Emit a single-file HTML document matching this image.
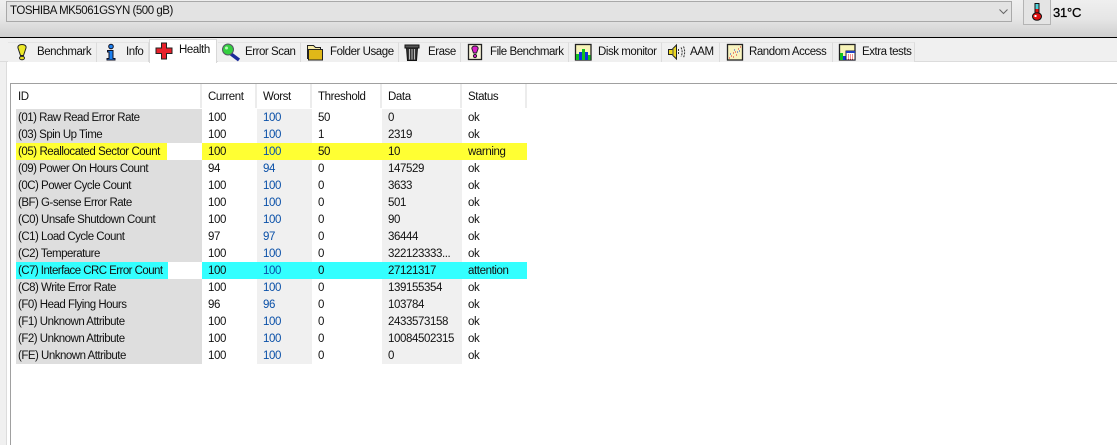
<!DOCTYPE html>
<html><head><meta charset="utf-8">
<style>
html,body{margin:0;padding:0;background:#fff}
#p{position:relative;width:1117px;height:445px;overflow:hidden;background:#fff;font:11.500px/17px "Liberation Sans",sans-serif;letter-spacing:-.4px;color:#111}
.a{position:absolute}
.t{position:absolute;white-space:nowrap}
.tab{position:absolute;top:42px;height:19px;background:#f0f0f0;border-right:1px solid #dcdcdc;border-top:1px solid #e4e4e4;box-sizing:content-box}
.tab span{position:absolute;top:1px;white-space:nowrap;line-height:17px;letter-spacing:-.45px}
.tab svg{position:absolute;top:0;left:0}
.r{position:absolute;left:16px;width:511px;height:17px}
.r div{position:absolute;top:0;height:17px;white-space:nowrap;line-height:19px;box-sizing:border-box;overflow:hidden}
.c0{left:0;width:186px;background:#dedede;padding-left:2px;letter-spacing:-.5px}
.c1{left:186px;width:55px;padding-left:6px}
.c2{left:241px;width:55px;padding-left:6px;background:#f0f0f0;color:#0a50a8}
.c3{left:296px;width:70px;padding-left:6px}
.c4{left:366px;width:80px;padding-left:6px;background:#f0f0f0}
.c5{left:446px;width:65px;padding-left:6px}
.y div{background:#ffff33}
.b div{background:#33ffff}
.y .c2,.b .c2{color:#0a50a8}
.y .c0,.b .c0{background:#fff;padding:0}
.y .c0 i,.b .c0 i{display:block;font-style:normal;height:17px;padding-left:2px;box-sizing:border-box}
.y .c0 i{background:#ffff33;width:151px;letter-spacing:-.44px}
.b .c0 i{background:#33ffff;width:152px;letter-spacing:-.55px}
.h{position:absolute;top:84px;height:24px;line-height:26px;white-space:nowrap;border-right:2px solid #ececec;box-sizing:border-box;padding-left:6px}
</style></head><body>
<div id="p">
<div class="a" style="left:0;top:0;width:1117px;height:37px;background:linear-gradient(#efefef 0,#e6e6e6 50%,#cfcfcf 100%)"></div>
<div class="a" style="left:0;top:37px;width:1117px;height:1px;background:#000"></div>
<div class="a" style="left:0;top:38px;width:1117px;height:24px;background:#f0f0f0"></div>
<div class="a" style="left:0;top:61px;width:1117px;height:1px;background:#dcdcdc"></div>
<div class="a" style="left:0;top:62px;width:6px;height:383px;background:#f0f0f0"></div>
<div class="a" style="left:6px;top:62px;width:1px;height:383px;background:#dcdcdc"></div>

<div class="a" style="left:6px;top:1px;width:1006px;height:21px;box-sizing:border-box;background:#e3e3e3;border:1px solid #a9a9a9"></div>
<div class="t" style="left:10px;top:3px;letter-spacing:-.47px">TOSHIBA MK5061GSYN (500 gB)</div>
<svg class="a" style="left:998px;top:8px" width="12" height="8"><path d="M1.500 1.500L5.500 5.500L9.500 1.500" fill="none" stroke="#666" stroke-width="1"/></svg>

<div class="a" style="left:1023px;top:-1px;width:28px;height:26px;box-sizing:border-box;border:1px solid #b4b4b4;background:#e4e4e4"></div>
<svg class="a" style="left:1030px;top:2px" width="14" height="19"><rect x="4.500" y="1" width="5" height="12" fill="#111"/><rect x="5.500" y="2" width="3" height="5" fill="#4fd0d8"/><rect x="5.500" y="7" width="3" height="7" fill="#e01010"/><ellipse cx="7" cy="14.500" rx="4.500" ry="3.800" fill="#e01010" stroke="#111"/><rect x="4.500" y="13" width="2" height="2" fill="#fff"/></svg>
<div class="t" style="left:1053px;top:4px;font-size:13px;letter-spacing:-.2px;color:#000;-webkit-text-stroke:.3px #000">31°C</div>

<!-- tabs -->
<div class="tab" style="left:8px;width:88px"><svg width="30" height="20"><path d="M14 1.500c3 0 4.500 1.500 4 3.500l-2.500 7.500h-3L10 5c-.5-2 1-3.500 4-3.500z" fill="#ece828" stroke="#222"/><ellipse cx="14" cy="15" rx="2.500" ry="1.800" fill="#e8e020" stroke="#222"/></svg><span style="left:29px">Benchmark</span></div>
<div class="tab" style="left:97px;width:51px"><svg width="30" height="20"><circle cx="14" cy="3.500" r="2.300" fill="#1c80f0" stroke="#112"/><path d="M10.500 7.500h5.500v8h2v1.500h-8v-1.500h2v-6.500h-1.500z" fill="#1c80f0" stroke="#112"/></svg><span style="left:29px">Info</span></div>
<div class="a" style="left:149px;top:39px;width:68px;height:24px;background:#fff;border:1px solid #d8d8d8;border-bottom:0;box-sizing:border-box">
<svg class="a" style="left:5px;top:2px" width="20" height="20"><path d="M6.500 1h5v5H17v5.500h-5.500V17h-5v-5.500H1V6h5.500z" fill="#e8202a" stroke="#222"/></svg><span class="t" style="left:29px;top:2px">Health</span></div>
<div class="tab" style="left:218px;width:82px"><svg width="30" height="20"><path d="M13 11l8 6" stroke="#1a2a9a" stroke-width="3.500"/><circle cx="10" cy="6.500" r="5.500" fill="#35d040" stroke="#556"/><circle cx="8.500" cy="5" r="1.500" fill="#b8f8b8"/></svg><span style="left:27px">Error Scan</span></div>
<div class="tab" style="left:301px;width:97px"><svg width="30" height="20"><path d="M6.500 16V2.500h6l2 2h5v3" fill="#f8eca8" stroke="#222"/><rect x="7.500" y="6.500" width="14" height="10.500" fill="#e0b818" stroke="#222"/></svg><span style="left:29px">Folder Usage</span></div>
<div class="tab" style="left:399px;width:61px"><svg width="30" height="20"><rect x="6" y="2" width="14" height="3" fill="#555" stroke="#111"/><path d="M7.500 5h11l-1 12.500h-9z" fill="#333" stroke="#111"/><path d="M10.500 6v10.500M13 6v10.500M15.500 6v10.500" stroke="#bbb"/></svg><span style="left:29px">Erase</span></div>
<div class="tab" style="left:461px;width:107px"><svg width="30" height="20"><rect x="7.500" y="1.500" width="13" height="15" fill="#f8f4d8" stroke="#222" stroke-width="1.300"/><path d="M14 3c2.500 0 3.500 1.500 3 3l-1.500 4h-3L11 6c-.5-1.500.5-3 3-3z" fill="#d820c8" stroke="#222"/><circle cx="14" cy="13" r="1.600" fill="#d820c8" stroke="#222"/></svg><span style="left:29px">File Benchmark</span></div>
<div class="tab" style="left:569px;width:92px"><svg width="30" height="20"><rect x="6.500" y="1.500" width="15.500" height="15.500" fill="#f8f4b8" stroke="#222" stroke-width="1.300"/><rect x="7" y="11" width="3" height="6" fill="#10c020"/><rect x="10" y="9" width="3" height="8" fill="#1030e0"/><rect x="13" y="6" width="3" height="11" fill="#10c020"/><rect x="16" y="9" width="3" height="8" fill="#1030e0"/><rect x="19" y="12" width="2.500" height="5" fill="#10c020"/></svg><span style="left:29px">Disk monitor</span></div>
<div class="tab" style="left:662px;width:57px"><svg width="30" height="20"><path d="M6.500 6.500h3.500l4.500-4.500v14l-4.500-4.500h-3.500z" fill="#ecd820" stroke="#222"/><path d="M11 5v8" stroke="#555"/><path d="M16.500 6v6M19 4.500c1.500 2.500 1.500 6.500 0 9M21.500 3.500c1.500 3.500 1.500 7.500 0 11" fill="none" stroke="#333" stroke-dasharray="2 1"/></svg><span style="left:28px">AAM</span></div>
<div class="tab" style="left:720px;width:112px"><svg width="30" height="20"><rect x="7.500" y="1.500" width="15" height="15.500" fill="#f8f4c0" stroke="#222" stroke-width="1.300"/><path d="M9 15h1M11 13h1M13 14h1M13 10h1M15 9h1M16 12h1M18 6h1M20 4h1" stroke="#e02020"/><path d="M10 11h1M14 7h1M17 9h1M19 8h1" stroke="#2040d0"/></svg><span style="left:29px">Random Access</span></div>
<div class="tab" style="left:833px;width:81px"><svg width="30" height="20"><rect x="6.500" y="1.500" width="15.500" height="15.500" fill="#f8f4b8" stroke="#222" stroke-width="1.300"/><rect x="7" y="10" width="3" height="7" fill="#10c020"/><rect x="10" y="13" width="3" height="4" fill="#1030e0"/><rect x="13" y="8" width="9" height="9" fill="#fff" stroke="#223"/><rect x="13" y="8" width="9" height="2" fill="#2040c0"/><path d="M15 12h6M15 14h6M15 16h6" stroke="#e02020" stroke-dasharray="1 1"/></svg><span style="left:29px">Extra tests</span></div>

<!-- table frame -->
<div class="a" style="left:10px;top:83px;width:1107px;height:1px;background:#a0a0a0"></div>
<div class="a" style="left:10px;top:83px;width:1px;height:362px;background:#a0a0a0"></div>

<div class="h" style="left:12px;width:190px">ID</div>
<div class="h" style="left:202px;width:55px">Current</div>
<div class="h" style="left:257px;width:55px">Worst</div>
<div class="h" style="left:312px;width:70px">Threshold</div>
<div class="h" style="left:382px;width:80px">Data</div>
<div class="h" style="left:462px;width:65px">Status</div>

<div class="r" style="top:109px"><div class="c0">(01) Raw Read Error Rate</div><div class="c1">100</div><div class="c2">100</div><div class="c3">50</div><div class="c4">0</div><div class="c5">ok</div></div>
<div class="r" style="top:126px"><div class="c0">(03) Spin Up Time</div><div class="c1">100</div><div class="c2">100</div><div class="c3">1</div><div class="c4">2319</div><div class="c5">ok</div></div>
<div class="r y" style="top:143px"><div class="c0"><i>(05) Reallocated Sector Count</i></div><div class="c1">100</div><div class="c2">100</div><div class="c3">50</div><div class="c4">10</div><div class="c5">warning</div></div>
<div class="r" style="top:160px"><div class="c0">(09) Power On Hours Count</div><div class="c1">94</div><div class="c2">94</div><div class="c3">0</div><div class="c4">147529</div><div class="c5">ok</div></div>
<div class="r" style="top:177px"><div class="c0">(0C) Power Cycle Count</div><div class="c1">100</div><div class="c2">100</div><div class="c3">0</div><div class="c4">3633</div><div class="c5">ok</div></div>
<div class="r" style="top:194px"><div class="c0">(BF) G-sense Error Rate</div><div class="c1">100</div><div class="c2">100</div><div class="c3">0</div><div class="c4">501</div><div class="c5">ok</div></div>
<div class="r" style="top:211px"><div class="c0">(C0) Unsafe Shutdown Count</div><div class="c1">100</div><div class="c2">100</div><div class="c3">0</div><div class="c4">90</div><div class="c5">ok</div></div>
<div class="r" style="top:228px"><div class="c0">(C1) Load Cycle Count</div><div class="c1">97</div><div class="c2">97</div><div class="c3">0</div><div class="c4">36444</div><div class="c5">ok</div></div>
<div class="r" style="top:245px"><div class="c0">(C2) Temperature</div><div class="c1">100</div><div class="c2">100</div><div class="c3">0</div><div class="c4">322123333...</div><div class="c5">ok</div></div>
<div class="r b" style="top:262px"><div class="c0"><i>(C7) Interface CRC Error Count</i></div><div class="c1">100</div><div class="c2">100</div><div class="c3">0</div><div class="c4">27121317</div><div class="c5">attention</div></div>
<div class="r" style="top:279px"><div class="c0">(C8) Write Error Rate</div><div class="c1">100</div><div class="c2">100</div><div class="c3">0</div><div class="c4">139155354</div><div class="c5">ok</div></div>
<div class="r" style="top:296px"><div class="c0">(F0) Head Flying Hours</div><div class="c1">96</div><div class="c2">96</div><div class="c3">0</div><div class="c4">103784</div><div class="c5">ok</div></div>
<div class="r" style="top:313px"><div class="c0">(F1) Unknown Attribute</div><div class="c1">100</div><div class="c2">100</div><div class="c3">0</div><div class="c4">2433573158</div><div class="c5">ok</div></div>
<div class="r" style="top:330px"><div class="c0">(F2) Unknown Attribute</div><div class="c1">100</div><div class="c2">100</div><div class="c3">0</div><div class="c4">10084502315</div><div class="c5">ok</div></div>
<div class="r" style="top:347px"><div class="c0">(FE) Unknown Attribute</div><div class="c1">100</div><div class="c2">100</div><div class="c3">0</div><div class="c4">0</div><div class="c5">ok</div></div>
</div>
</body></html>
